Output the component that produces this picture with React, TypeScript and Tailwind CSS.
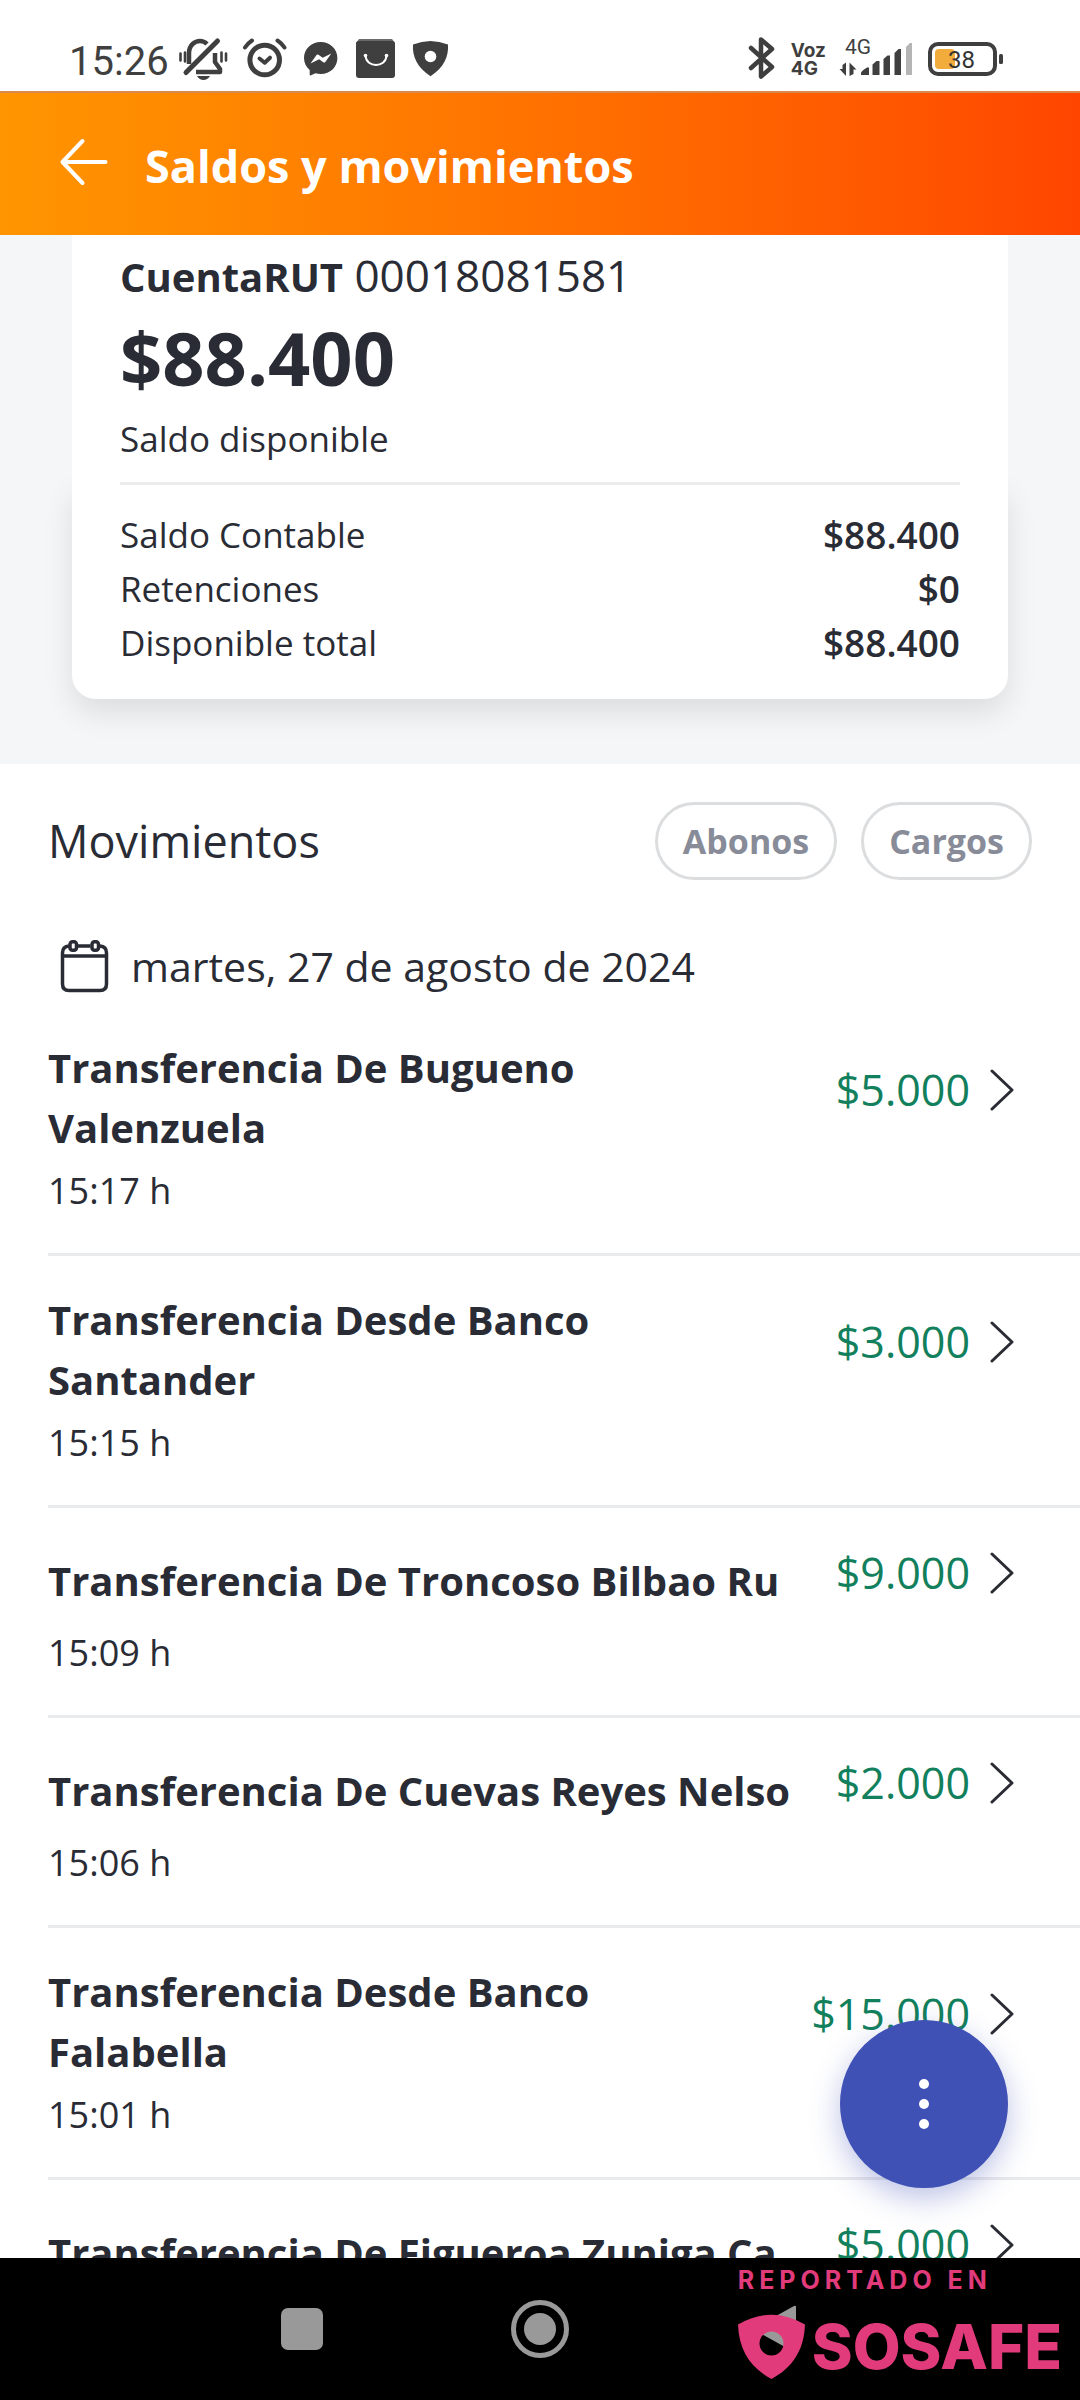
/**
 * @file App.tsx
 * @description Saldos y movimientos de la cuenta
 */

type Movement = {
  id: number;
  title: string;
  time: string;
  amount: string;
};

const BALANCES = [
  { label: "Saldo Contable", value: "$88.400" },
  { label: "Retenciones", value: "$0" },
  { label: "Disponible total", value: "$88.400" },
];

// El salto de línea viene en el título cuando el nombre ocupa dos líneas
const MOVEMENTS: Movement[] = [
  { id: 1, title: "Transferencia De Bugueno\nValenzuela", time: "15:17 h", amount: "$5.000" },
  { id: 2, title: "Transferencia Desde Banco\nSantander", time: "15:15 h", amount: "$3.000" },
  { id: 3, title: "Transferencia De Troncoso Bilbao Ru", time: "15:09 h", amount: "$9.000" },
  { id: 4, title: "Transferencia De Cuevas Reyes Nelso", time: "15:06 h", amount: "$2.000" },
  { id: 5, title: "Transferencia Desde Banco\nFalabella", time: "15:01 h", amount: "$15.000" },
  { id: 6, title: "Transferencia De Figueroa Zuniga Ca", time: "", amount: "$5.000" },
];

function StatusBar() {
  return (
    <div className="flex shrink-0 items-center justify-between h-[91px] pt-[29px] pl-[69px] pr-[75px] bg-white text-[#3f3f3f]">
      <div className="flex items-center gap-3">
        <span className="font-[Roboto,sans-serif] text-[40px] leading-[48px] pt-1 -mr-1">15:26</span>

        {/* Vibración / silencio */}
        <svg width="52" height="48" viewBox="178 36 52 48" fill="none" stroke="currentColor" strokeWidth="4" aria-hidden="true">
          <path d="M190 64V53c0-8 6-12 11-12 3 0 5 1 7 3" strokeWidth="4.5" />
          <path d="M216 53v9l5 7v3h-24" strokeWidth="4.5" strokeLinejoin="round" />
          <path d="M187 72.500L218.500 41" strokeWidth="5" strokeLinecap="round" />
          <path d="M198 76h13q-2.500 4-6.500 4t-6.500-4z" fill="currentColor" stroke="none" />
          <path d="M181.500 53.500v7M186 52.500v9M222.500 52.500v9M227 53.500v7" strokeWidth="2.600" strokeLinecap="round" />
        </svg>

        {/* Alarma */}
        <svg width="48" height="48" viewBox="242 36 48 48" fill="none" stroke="currentColor" strokeLinecap="round" strokeLinejoin="round" aria-hidden="true">
          <circle cx="265.700" cy="60" r="14.800" strokeWidth="5" />
          <path d="M260.500 58.500l5.200 4.200 5.300-5" strokeWidth="4" />
          <path d="M246 47.500q2.500-4 7-7M278.500 40.500q4.500 3 7 7" strokeWidth="4" />
        </svg>

        {/* Messenger */}
        <svg width="40" height="48" viewBox="302 36 40 48" aria-hidden="true">
          <path d="M321.700 42c-9.500 0-16.700 7-16.700 16 0 5 2.200 9 5.700 12v4.600c0 1 .7 1 1.300.7l4.500-2c1.600.5 3.400.7 5.200.7 9.500 0 16.700-7 16.700-16s-7.200-16-16.700-16z" fill="currentColor" />
          <path d="M311.500 63.500l6-8.500q1-1 2-.2l4.200 3 8.600-4.300-6 8.500q-1 1-2 .2l-4.200-3z" fill="#fff" />
        </svg>

        {/* Bolsa de compras */}
        <svg width="45" height="48" viewBox="354 36 45 48" fill="none" aria-hidden="true">
          <path d="M360 39h33l3 4h-39z" fill="#6a6a6a" />
          <rect x="357" y="41" width="39" height="37" rx="3" fill="currentColor" />
          <path d="M366.500 56c1 12 20 12 21 0" stroke="#fff" strokeWidth="2" />
          <circle cx="366.500" cy="55.500" r="1.800" fill="#fff" />
          <circle cx="387.500" cy="55.500" r="1.800" fill="#fff" />
        </svg>

        {/* Escudo */}
        <svg width="42" height="48" viewBox="411 36 42 48" aria-hidden="true">
          <path d="M414 44.500q17.500-7 35 0c.8 12-4 23-17.500 31.700C418 67.500 413.200 56.500 414 44.500z" fill="currentColor" />
          <circle cx="431.500" cy="56.500" r="5.800" fill="#fff" />
        </svg>
      </div>

      <div className="flex items-center gap-3">
        {/* Bluetooth */}
        <svg width="35" height="48" viewBox="742 36 35 48" fill="none" stroke="currentColor" strokeWidth="4.500" strokeLinecap="round" strokeLinejoin="round" aria-hidden="true">
          <path d="M749 48l21 19-11 9.500v-37l11 9.500-21 19" />
        </svg>

        <span className="font-[Inter,sans-serif] text-[19px] leading-[18px] font-bold">
          Voz
          <br />
          4G
        </span>

        {/* Señal 4G */}
        <svg width="76" height="48" viewBox="838 36 76 48" fill="currentColor" aria-label="Señal 4G">
          <text x="845" y="54" fontSize="21" fontFamily="Roboto, sans-serif">4G</text>
          <path d="M846 62.500V76l-6.500-7h3v-4zM849.500 76V62.500l7 7h-3V74z" />
          <path d="M861 75v-2q0-2 6-5.500h2V75zM872.500 75V64.500l4-3.500h3V75zM883.500 75V59l4-3.500h2.500V75zM894.500 75V53l4-4h2.500V75z" />
          <path d="M906 75V47l4-4h2v32z" fill="#b5b5b5" />
        </svg>

        {/* Batería */}
        <svg width="79" height="48" viewBox="926 36 79 48" aria-label="Batería 38 %">
          <rect x="930" y="44" width="65" height="30" rx="8" fill="none" stroke="currentColor" strokeWidth="4" />
          <rect x="999" y="54" width="4" height="10" rx="1.500" fill="currentColor" />
          <rect x="935" y="49" width="20" height="20" rx="4" fill="#f2ac3c" />
          <text x="948" y="68" fontSize="24" fontFamily="Roboto, sans-serif" fill="#333">38</text>
        </svg>
      </div>
    </div>
  );
}

function Header() {
  return (
    <header className="relative z-20 flex shrink-0 items-center h-[144px] pl-[58px] gap-9 border-t-2 border-[#d98a4e] bg-linear-to-r from-[#ff9500] to-[#ff4500] text-white">
      <button type="button" aria-label="Volver" className="pb-1">
        <svg width="51" height="48" viewBox="0 0 51 48" fill="none" stroke="currentColor" strokeWidth="4" strokeLinecap="round" strokeLinejoin="round" aria-hidden="true">
          <path d="M24.500 3L4.500 24l20 21M4.500 24h43" />
        </svg>
      </button>
      <h1 className="text-[45px] leading-[60px] font-bold pt-1">Saldos y movimientos</h1>
    </header>
  );
}

function BalanceCard() {
  return (
    <section className="shrink-0 px-[72px] pb-[65px] bg-[#f5f6f8]">
      <div className="relative z-10 px-12 pt-[13px] pb-4 bg-white">
        <p className="text-[44px] leading-[54px]">
          <span className="text-[40px] font-bold">CuentaRUT</span> 00018081581
        </p>
        <p className="mt-2 text-[74px] leading-[92px] font-bold">$88.400</p>
        <p className="mt-2 text-[35px] leading-[54px]">Saldo disponible</p>
      </div>
      <div className="rounded-b-[24px] px-12 pb-[29px] bg-white shadow-[0_14px_30px_rgba(0,0,0,0.1)]">
        <dl className="relative z-10 border-t-3 border-[#ececec] pt-[23px] text-[35px] leading-[54px]">
          {BALANCES.map(b => (
            <div key={b.label} className="flex justify-between">
              <dt>{b.label}</dt>
              <dd className="text-[37px] font-semibold">{b.value}</dd>
            </div>
          ))}
        </dl>
      </div>
    </section>
  );
}

function MovementRow({ movement }: { movement: Movement }) {
  return (
    <li className="ml-12 flex items-center justify-between pt-[34px] pb-[35px] pr-[66px] border-b-3 border-[#e9eaec]">
      <div className="flex flex-col gap-1.5">
        <h3 className="flex items-center min-h-[78px] text-[40px] leading-[60px] font-bold whitespace-pre">
          {movement.title}
        </h3>
        <p className="min-h-[54px] text-[36px] leading-[54px]">{movement.time}</p>
      </div>
      <a href={`#movimiento-${movement.id}`} className="flex items-center gap-5 pb-[76px] text-[43px] leading-[54px] text-[#12805c]">
        {movement.amount}
        <svg width="24" height="42" viewBox="0 0 24 42" fill="none" stroke="#2a2c33" strokeWidth="3" strokeLinecap="round" strokeLinejoin="round" aria-hidden="true">
          <path d="M2 2l20 19L2 40" />
        </svg>
      </a>
    </li>
  );
}

function Movements() {
  return (
    <section className="pt-[38px]">
      <div className="flex items-center justify-between px-12">
        <h2 className="text-[45px] leading-[60px]">Movimientos</h2>
        <div className="flex gap-6 text-[34px] leading-[72px] font-bold text-[#888b98]">
          <button type="button" className="rounded-full border-3 border-[#dcdddf] px-[25px]">Abonos</button>
          <button type="button" className="rounded-full border-3 border-[#dcdddf] px-[25px]">Cargos</button>
        </div>
      </div>

      <div className="flex items-center gap-5 mt-14 mb-2 pl-[58px]">
        <svg width="53" height="56" viewBox="58 940 53 56" fill="none" stroke="currentColor" strokeWidth="3.500" aria-hidden="true">
          <path d="M69 948q-6.500.5-6.500 7v31q0 6.500 6.500 6.500h31q6.500 0 6.500-6.500v-31q0-6.500-6.500-7M77.500 948h13M62.500 958h44" />
          <rect x="70" y="943.700" width="6.500" height="8.600" rx="2.500" />
          <rect x="92" y="943.700" width="6.500" height="8.600" rx="2.500" />
        </svg>
        <p className="text-[41px] leading-[60px]">martes, 27 de agosto de 2024</p>
      </div>

      <ul>
        {MOVEMENTS.map(m => <MovementRow key={m.id} movement={m} />)}
      </ul>
    </section>
  );
}

function SosafeMark() {
  return (
    <div className="absolute right-[18px] top-2 font-[Inter,sans-serif] text-[#e23b7b]">
      <p className="text-[25px] leading-[28px] font-bold tracking-[0.2em]">REPORTADO EN</p>
      <div className="flex items-center gap-[7px] mt-5">
        <svg width="67" height="66" viewBox="0 0 67 66" fill="currentColor" fillRule="evenodd" aria-hidden="true">
          <path d="M0 10.500Q33.500-9 67 10.500C66 37 54 54 33.500 65 13 54 1 37 0 10.500zM33.500 17.500a12 12 0 1 0 0 24 12 12 0 0 0 0-24z" />
        </svg>
        <span className="text-[62px] leading-[66px] font-extrabold">SOSAFE</span>
      </div>
    </div>
  );
}

function NavBar() {
  return (
    <nav className="relative flex shrink-0 items-center justify-center gap-[188px] h-[142px] bg-black text-[#999]">
      <button type="button" aria-label="Recientes" className="size-[42px] rounded-[7px] bg-[#999]" />
      <button type="button" aria-label="Inicio" className="flex items-center justify-center size-[58px] rounded-full border-5 border-[#999]">
        <span className="size-8 rounded-full bg-[#999]" />
      </button>
      <button type="button" aria-label="Atrás">
        <svg width="42" height="48" viewBox="0 0 42 48" fill="currentColor" aria-hidden="true">
          <path d="M37 1q2-1 2 1v44q0 2-2 1L-2 25.500q-2-1.500 0-3z" />
        </svg>
      </button>
      <SosafeMark />
    </nav>
  );
}

export default function App() {
  return (
    <div className="flex flex-col h-screen overflow-hidden bg-white font-['Open_Sans','Noto_Sans',sans-serif] text-[#2a2c35]">
      <StatusBar />
      <Header />

      {/* ========== CONTENIDO ========== */}
      <div className="relative flex flex-col flex-1 min-h-0">
        <main className="flex-1 min-h-0 overflow-hidden">
          <BalanceCard />
          <Movements />
        </main>
        <button
          type="button"
          aria-label="Más opciones"
          className="absolute right-[72px] bottom-[70px] flex flex-col items-center justify-center gap-2.5 size-[168px] rounded-full bg-[#3f51b5] shadow-[0_10px_30px_rgba(63,81,181,0.35)]"
        >
          <span className="size-2.5 rounded-full bg-white" />
          <span className="size-2.5 rounded-full bg-white" />
          <span className="size-2.5 rounded-full bg-white" />
        </button>
      </div>

      <NavBar />
    </div>
  );
}
